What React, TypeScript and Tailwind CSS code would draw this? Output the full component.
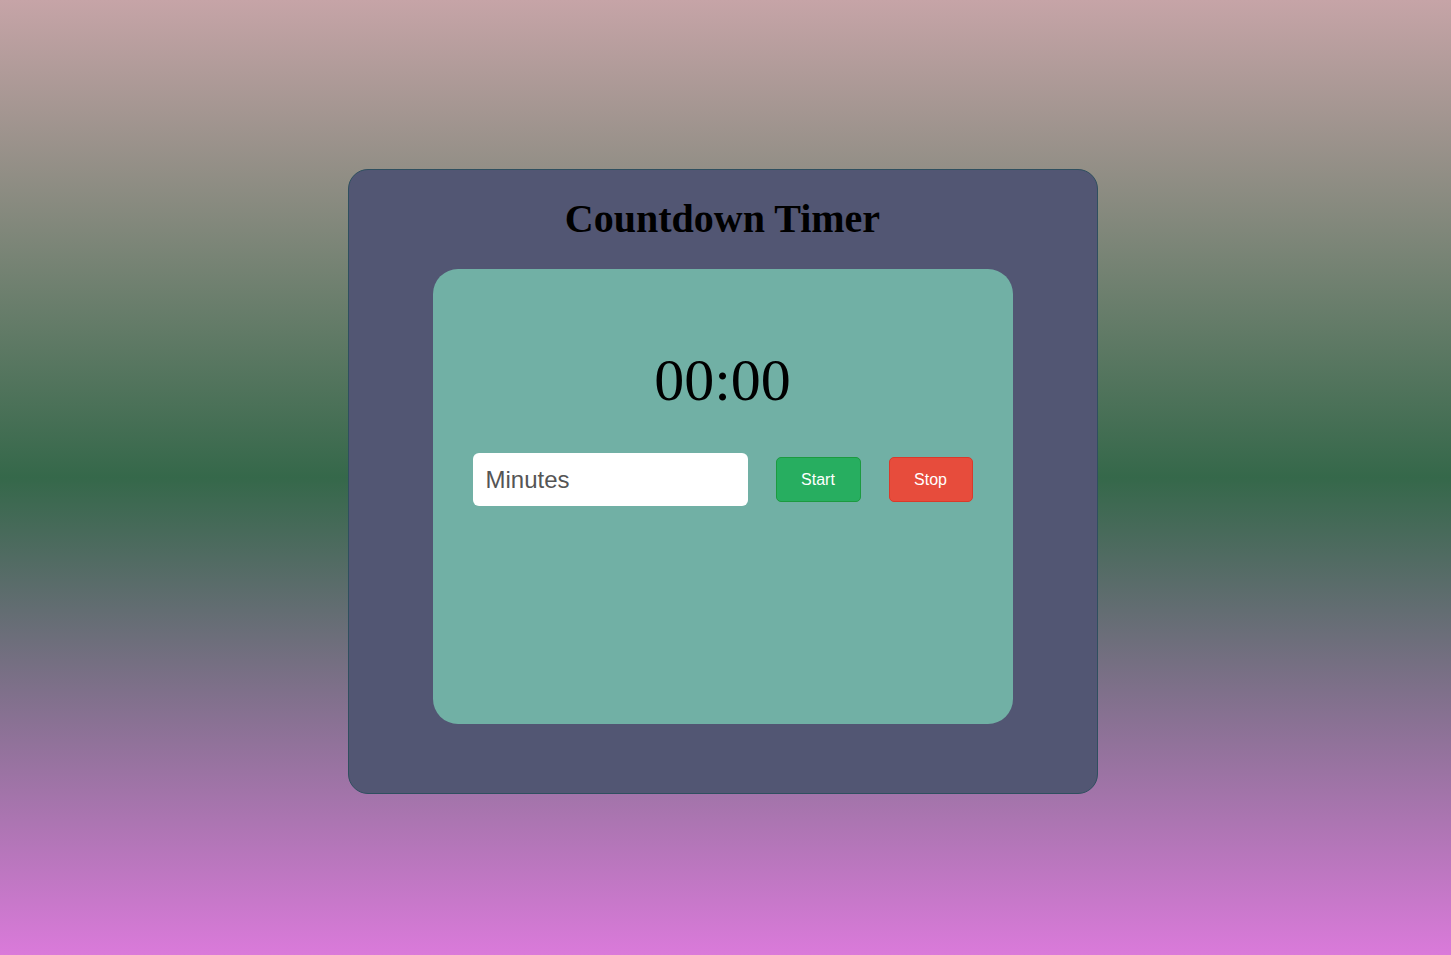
import React from "react";

export default function App() {
  return (
    <div className="w-[1451px] h-[955px] bg-[linear-gradient(#c6a4a7,#35684a_50%,#da7ada)] flex items-start justify-center pt-[169px] pr-[6px]">
      <div className="w-[750px] h-[625px] bg-[#525673] border border-[#2f4f5f] rounded-[20px] flex flex-col items-center">
        <h1 className="mt-[26px] h-[46px] leading-[46px] text-[40px] font-bold text-black font-['Liberation_Serif',serif]">
          Countdown Timer
        </h1>
        <div className="mt-[27px] w-[580px] h-[455px] bg-[#71b0a5] rounded-[25px] flex flex-col items-center">
          <div className="mt-[79px] h-[64px] leading-[64px] text-[60px] text-black font-['Liberation_Serif',serif]">
            00:00
          </div>
          <div className="mt-[41px] w-full px-[40px] flex items-center justify-between">
            <input
              placeholder="Minutes"
              className="w-[275px] h-[53px] bg-white rounded-[6px] px-[13px] text-[24px] text-[#333] placeholder:text-[#555] outline-none font-['Liberation_Sans',sans-serif]"
            />
            <button className="w-[85px] h-[45px] bg-[#27ae60] border border-[#1c9a40] rounded-[5px] text-white text-[16px] font-['Liberation_Sans',sans-serif]">
              Start
            </button>
            <button className="w-[84px] h-[45px] bg-[#e74c3c] border border-[#d93a2b] rounded-[5px] text-white text-[16px] font-['Liberation_Sans',sans-serif]">
              Stop
            </button>
          </div>
        </div>
      </div>
    </div>
  );
}
